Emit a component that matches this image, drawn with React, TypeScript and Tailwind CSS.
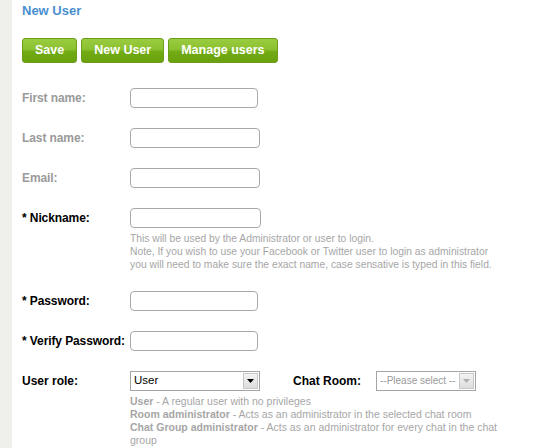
import React from "react";

const font = { fontFamily: '"Liberation Sans", Arial, sans-serif' };

function TextInput({ w = "w-[129px]" }: { w?: string }) {
  return <div className={`h-5 ${w} rounded-[4px] border border-[#a9a9a9] bg-white`} />;
}

function Field({
  label,
  required,
  w,
  children,
}: {
  label: string;
  required?: boolean;
  w?: string;
  children?: React.ReactNode;
}) {
  return (
    <div className="flex">
      <div
        className={`w-[108px] h-5 flex items-center text-[12px] font-bold tracking-[-0.1px] ${
          required ? "text-black" : "text-[#9a9a9a]"
        }`}
      >
        {required ? "* " : ""}
        {label}
      </div>
      <div>
        <TextInput w={w} />
        {children}
      </div>
    </div>
  );
}

function FakeSelect({
  value,
  w,
  disabled,
}: {
  value: string;
  w: string;
  disabled?: boolean;
}) {
  return (
    <div className={`h-5 ${w} flex border border-[#a5a5a5] bg-white`}>
      <div
        className={`flex-1 flex items-center pl-[3px] overflow-hidden whitespace-nowrap ${
          disabled ? "text-[#9a9a9a] text-[10px]" : "text-black text-[11.5px]"
        }`}
      >
        {value}
      </div>
      <div className="w-[15px] m-[1px] flex items-center justify-center border border-[#c8c8c8] bg-gradient-to-b from-[#f4f4f4] to-[#dcdcdc]">
        <svg width="7" height="4" viewBox="0 0 7 4">
          <path d="M0 0h7L3.5 4z" fill={disabled ? "#b0b0b0" : "#000"} />
        </svg>
      </div>
    </div>
  );
}

function GreenButton({ children }: { children: React.ReactNode }) {
  return (
    <div className="h-[25px] px-3 flex items-center rounded-[3px] border border-[#6c9e1c] bg-[linear-gradient(#99cc3f_0%,#8cc131_45%,#72ab14_55%,#6aa10d_100%)] text-white text-[12.5px] font-bold">
      {children}
    </div>
  );
}

export default function App() {
  return (
    <div className="flex w-[540px] h-[448px] bg-white overflow-hidden" style={font}>
      <div className="w-3 shrink-0 bg-[#efefeb]" />
      <div className="pl-[10px] pt-[1px]">
        <div className="text-[13px] font-bold text-[#4a8fcf]">New User</div>
        <div className="flex gap-1 mt-[17px]">
          <GreenButton>Save</GreenButton>
          <GreenButton>New User</GreenButton>
          <GreenButton>Manage users</GreenButton>
        </div>
        <div className="mt-[25px] flex flex-col gap-5">
          <Field label="First name:" w="w-[128px]" />
          <Field label="Last name:" w="w-[130px]" />
          <Field label="Email:" w="w-[130px]" />
          <Field label="Nickname:" required w="w-[131px]">
            <div className="mt-[4px] text-[10.3px] leading-[13px] text-[#a6a6a6] whitespace-nowrap">
              <div>This will be used by the Administrator or user to login.</div>
              <div>Note, If you wish to use your Facebook or Twitter user to login as administrator</div>
              <div>you will need to make sure the exact name, case sensative is typed in this field.</div>
            </div>
          </Field>
          <Field label="Password:" required w="w-[128px]" />
          <Field label="Verify Password:" required w="w-[128px]" />
          <div className="flex">
            <div className="w-[108px] h-5 flex items-center text-[12px] font-bold text-black">
              User role:
            </div>
            <div>
              <div className="flex items-center">
                <FakeSelect value="User" w="w-[130px]" />
                <div className="ml-[33px] w-[83px] text-[12px] font-bold text-black">Chat Room:</div>
                <FakeSelect value="--Please select --" w="w-[100px]" disabled />
              </div>
              <div className="mt-[4px] text-[10.5px] leading-[13px] text-[#a6a6a6] w-[378px]">
                <div>
                  <b>User</b> - A regular user with no privileges
                </div>
                <div>
                  <b>Room administrator</b> - Acts as an administrator in the selected chat room
                </div>
                <div>
                  <b>Chat Group administrator</b> - Acts as an administrator for every chat in the chat
                  group
                </div>
              </div>
            </div>
          </div>
        </div>
      </div>
    </div>
  );
}
